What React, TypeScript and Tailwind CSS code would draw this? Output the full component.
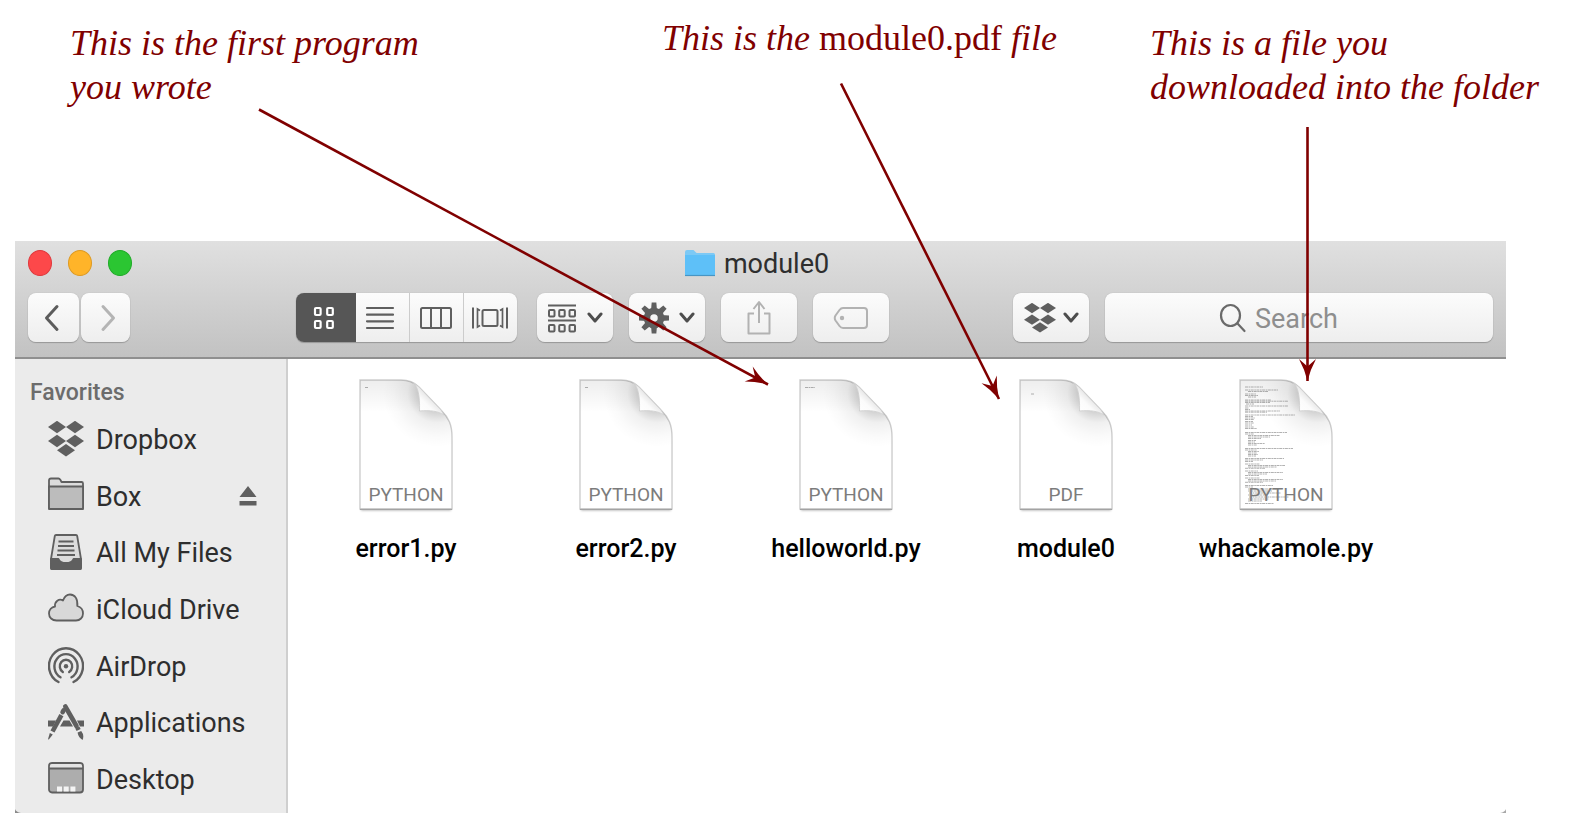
import type { ReactNode } from 'react';

const INK = '#5f5f5f';

function DropboxMark({ className }: { className: string }) {
  const centres = [[9, 6], [27, 6], [9, 20], [27, 20], [18, 29.3]];
  return (
    <svg viewBox="0 0 36 36" preserveAspectRatio="none" className={className} fill={INK} aria-hidden="true">
      {centres.map(([x, y]) => (
        <path key={`${x}-${y}`} d={`M${x - 9} ${y}L${x} ${y - 6.2}L${x + 9} ${y}L${x} ${y + 6.2}Z`} />
      ))}
    </svg>
  );
}

function SideIcon({ children }: { children: ReactNode }) {
  return (
    <svg viewBox="0 0 36 38" className="h-[38px] w-9 shrink-0" fill="none" stroke={INK} strokeWidth="1.8" strokeLinejoin="round" aria-hidden="true">
      {children}
    </svg>
  );
}

const boxIcon = (
  <SideIcon>
    <path d="M1 32V3.500Q1 1.500 3 1.500H10.500Q11.500 1.500 12.300 2.700L13.500 5H33.500Q35 5 35 6.500V32Z" fill="#dcdcdc" />
    <path d="M1 9.500H35V30.500Q35 32 33.500 32H2.500Q1 32 1 30.500Z" fill="#bcbcbc" />
  </SideIcon>
);

const filesIcon = (
  <SideIcon>
    <path d="M8 2H28Q29 2 29.200 3L33 26V35Q33 36 32 36H4Q3 36 3 35V26L6.800 3Q7 2 8 2Z" fill="#dcdcdc" />
    <path d="M3 26H10.500Q12 30 18 30Q24 30 25.500 26H33V35Q33 36 32 36H4Q3 36 3 35Z" fill={INK} />
    <path d="M10.500 8.500H25.500M10 13H26M9.500 17.500H26.500M9 22H27" />
  </SideIcon>
);

const cloudIcon = (
  <SideIcon>
    <path d="M8.500 30.500C4 30.500 1 27.500 1 23.500C1 20 3.500 17 7 16.500C6.500 11.500 11 8 15 10.500C16.500 6.500 19 4.500 22 4.500C27 4.500 30 9 29.300 16C33 17 35 20 35 23.500C35 27.500 32 30.500 28 30.500Z" fill="#d8d8d8" />
  </SideIcon>
);

const airdropIcon = (
  <SideIcon>
    <g strokeWidth="2.400" strokeLinecap="round">
      <path d="M10.500 35A17 17.800 0 1 1 25.500 35" />
      <path d="M12.500 30.300A11.600 12.300 0 1 1 23.500 30.300" />
      <path d="M14.800 25A6.200 6.600 0 1 1 21.200 25" />
    </g>
    <circle cx="18" cy="19.300" r="2.200" fill={INK} stroke="none" />
  </SideIcon>
);

const appsIcon = (
  <SideIcon>
    <g stroke="none" fill={INK}>
      <path d="M0 17.500H8L5 23.500H0ZM12 23.500L15.500 17.500H21.500L25 23.500ZM29 17.500H36V23.500H32Z" />
    </g>
    <g strokeWidth="4.600">
      <path d="M17.300 3.500L28.500 23" strokeLinecap="round" />
      <path d="M29.300 24.500L30.600 27" />
      <path d="M14.600 9.200L15.600 7.400" strokeLinecap="round" />
      <path d="M13.400 12.200L4.500 28.500" />
    </g>
    <path d="M1.800 30L4.800 31.500L0.800 36.500L0 36.200Z" fill={INK} stroke="none" />
    <path d="M29.600 29.500L33.200 28Q36.500 32 34.600 37Q30.300 34.500 29.600 29.500Z" fill={INK} stroke="none" />
  </SideIcon>
);

const desktopIcon = (
  <SideIcon>
    <rect x="1" y="3" width="34" height="29.500" rx="3" fill="#adadad" />
    <path d="M1.900 8V6Q1.900 3.900 4 3.900H32Q34.100 3.900 34.100 6V8Z" fill="#e4e4e4" stroke="none" />
    <path d="M1 8.500H35" />
    <path d="M9 26.500h5v5h-5zM15.700 26.500h5v5h-5zM22.400 26.500h5v5h-5z" fill="#f4f4f4" stroke="none" />
  </SideIcon>
);

const dropboxIcon = (
  <span className="flex h-[38px] w-9 shrink-0 items-center">
    <DropboxMark className="h-9 w-9" />
  </span>
);

const favorites = [
  { name: 'Dropbox', icon: dropboxIcon },
  { name: 'Box', icon: boxIcon, eject: true },
  { name: 'All My Files', icon: filesIcon },
  { name: 'iCloud Drive', icon: cloudIcon },
  { name: 'AirDrop', icon: airdropIcon },
  { name: 'Applications', icon: appsIcon },
  { name: 'Desktop', icon: desktopIcon },
];

/* Preview lines: y, indent, length */
const codeLines = [
  [7, 0, 18], [10, 0, 33], [11.5, 3, 20], [14, 0, 11], [15.5, 0, 13], [17, 3, 8],
  [20, 0, 26], [21.2, 0, 43], [22.5, 0, 25], [24, 1, 8], [26, 0, 43], [28, 0, 4], [29.5, 0, 5],
  [31, 0, 35], [32.2, 0, 22], [35, 0, 50], [36.5, 0, 8], [38, 0, 10], [39.5, 0, 9], [41.5, 0, 8], [43, 0, 9],
  [45, 0, 7], [47, 0, 9], [48.5, 0, 12], [52.5, 0, 42], [54, 0, 9], [55.5, 3, 32], [57, 3, 22], [58.5, 3, 13],
  [60.5, 3, 8], [62, 3, 7], [63.5, 3, 17], [65, 3, 9], [68.5, 0, 48], [70, 0, 12], [71.5, 3, 11], [73, 3, 9],
  [74.5, 3, 10], [76, 3, 8], [78.5, 0, 39], [80, 0, 18], [81.5, 0, 8], [84, 0, 15], [85.5, 3, 37], [87, 3, 29],
  [88.3, 0, 20], [91, 0, 13], [92.5, 3, 35], [94, 3, 19], [95.5, 0, 14], [98, 0, 15], [99.5, 3, 35], [101, 3, 28],
  [102.3, 0, 18], [105.5, 0, 28], [107, 0, 8], [109, 3, 30], [111, 3, 24], [113, 4, 32], [115, 3, 18], [117, 4, 40],
  [119, 3, 21], [121, 3, 14], [123.5, 0, 29],
];

type Doc = { name: string; kind: string; marks: number[][] };

const docs: Doc[] = [
  { name: 'error1.py', kind: 'PYTHON', marks: [[7.5, 0, 3]] },
  { name: 'error2.py', kind: 'PYTHON', marks: [[7.5, 0, 3]] },
  { name: 'helloworld.py', kind: 'PYTHON', marks: [[7.5, 0, 10]] },
  { name: 'module0', kind: 'PDF', marks: [[14, 6, 3]] },
  { name: 'whackamole.py', kind: 'PYTHON', marks: codeLines },
];

function DocIcon({ marks }: { marks: number[][] }) {
  const page = 'M1 1H42C51 1 56 4 60 8L82 31C90 39 93 46 93 58V130H1Z';
  return (
    <svg viewBox="0 0 94 134" className="col-start-1 row-start-1 h-[134px] w-[94px]" aria-hidden="true">
      <path d="M2 60H92V131.500H2Z" fill="#000" opacity="0.3" filter="url(#soft)" />
      <path d={page} fill="#fff" stroke="#cfcfcf" strokeWidth="1.4" />
      <path d={page} fill="url(#topShade)" />
      <path d={page} fill="url(#foldShade)" />
      <path d="M1 130.300H93" stroke="#a3a3a3" strokeWidth="1.200" />
      {marks.map(([y, x, w]) => (
        <path key={y} d={`M${6 + x} ${y + 1}h${w}`} stroke="#555" strokeWidth="0.9" strokeDasharray="3 0.6 1.6 0.5" opacity="0.5" />
      ))}
      <path d="M54 3.500C59 8 61 16 60.500 32C71 31 79 32 85 36L82 31L60 8Z" fill="url(#flap)" stroke="#d0d0d0" strokeWidth="0.9" />
    </svg>
  );
}

function Chevron() {
  return (
    <svg viewBox="0 0 16 12" className="h-3 w-4" fill="none" stroke="#4d4d4d" strokeWidth="3" strokeLinecap="round" strokeLinejoin="round" aria-hidden="true">
      <path d="M2 2L8 9L14 2" />
    </svg>
  );
}

const face = 'flex h-[49px] items-center justify-center bg-linear-to-b from-[#fcfcfc] to-[#eeeeee]';
const tile = `${face} rounded-lg shadow-[0_1px_1px_#979797,0_0_1px_#a0a0a0]`;

function Note({ className, children }: { className: string; children: ReactNode }) {
  return <p className={`whitespace-nowrap text-[36px] leading-[44px] italic text-[#800000] ${className}`}>{children}</p>;
}

export default function App() {
  return (
    <main className="relative min-h-[829px] bg-white font-[Roboto,sans-serif]">
      <header className="grid h-[241px] grid-cols-[592fr_488fr_430fr] items-start pl-[70px] font-['Palatino_Linotype','Liberation_Serif',serif]">
        <Note className="pt-[21px]">This is the first program<br />you wrote</Note>
        <Note className="pt-4">This is the <span className="not-italic">module0.pdf</span> file</Note>
        <Note className="pt-[21px]">This is a file you<br />downloaded into the folder</Note>
      </header>

      <section className="relative mr-[74px] ml-[15px] flex min-h-[572px] flex-col" aria-label="module0">
        <div className="border-b-2 border-[#8f8f8f] bg-linear-to-b from-[#e0e0e0] to-[#c2c2c2] px-3 pb-[15px]">
          <div className="grid h-11 grid-cols-[1fr_auto_1fr] items-center">
            <div className="flex gap-4 pl-px">
              <button aria-label="Close" className="h-[26px] w-6 rounded-[50%] border border-[#e0383c] bg-[#fd484a]" />
              <button aria-label="Minimize" className="h-[26px] w-6 rounded-[50%] border border-[#de9a22] bg-[#ffb429]" />
              <button aria-label="Zoom" className="h-[26px] w-6 rounded-[50%] border border-[#1fab27] bg-[#2bc632]" />
            </div>
            <h1 className="flex items-center gap-2 pr-2 text-[27px] leading-8 text-[#2e2e2e]">
              <svg viewBox="0 0 32 28" className="h-7 w-8" aria-hidden="true">
                <path d="M1 26V3Q1 1 3 1H9.500L12.500 4H29.500Q31 4 31 5.500V26Z" fill="#7cc9f5" />
                <path d="M1 6H31V25Q31 26.500 29.500 26.500H2.500Q1 26.500 1 25Z" fill="#5ec0f8" />
                <path d="M1 26.500H31" stroke="#4795c4" strokeWidth="1.200" />
              </svg>
              <span className="pt-[2px]">module0</span>
            </h1>
          </div>
          <div className="mt-2 flex">
            <div className="flex gap-[2px] pl-px">
              <button aria-label="Back" className={`${tile} w-[51px]`}>
                <svg viewBox="0 0 16 28" className="mr-1 h-7 w-4" fill="none" stroke="#5c5c5c" strokeWidth="3" strokeLinecap="round" strokeLinejoin="round"><path d="M13 2.500L2.500 14L13 25.500" /></svg>
              </button>
              <button aria-label="Forward" className={`${tile} w-[49px]`}>
                <svg viewBox="0 0 16 28" className="ml-1 h-7 w-4" fill="none" stroke="#b4b4b4" strokeWidth="3" strokeLinecap="round" strokeLinejoin="round"><path d="M3 2.500L13.500 14L3 25.500" /></svg>
              </button>
            </div>
            <div className="grow-4" />
            <div className="flex overflow-hidden rounded-lg shadow-[0_1px_1px_#979797,0_0_1px_#a0a0a0]">
              <button aria-label="Icon view" aria-pressed="true" className="flex h-[49px] w-[60px] items-center justify-center bg-[#565656]">
                <svg viewBox="0 0 22 24" className="mr-1 h-6 w-[22px]" fill="none" stroke="#fff" strokeWidth="2.200"><rect x="2" y="2" width="5.600" height="7" rx="1" /><rect x="14.200" y="2" width="5.600" height="7" rx="1" /><rect x="2" y="15" width="5.600" height="7" rx="1" /><rect x="14.200" y="15" width="5.600" height="7" rx="1" /></svg>
              </button>
              <button aria-label="List view" className={`${face} w-[53px]`}>
                <svg viewBox="0 0 30 24" className="mr-1 h-6 w-[30px]" stroke={INK} strokeWidth="2.200" strokeLinecap="round"><path d="M2 2H28M2 8.700H28M2 15.300H28M2 22H28" /></svg>
              </button>
              <button aria-label="Column view" className={`${face} w-[54px] border-l border-[#cccccc]`}>
                <svg viewBox="0 0 34 24" className="h-6 w-[34px]" fill="none" stroke={INK} strokeWidth="2"><rect x="2" y="2" width="30" height="20" rx="1.500" /><path d="M12 2V22M22 2V22" /></svg>
              </button>
              <button aria-label="Cover Flow view" className={`${face} w-[54px] border-l border-[#cccccc]`}>
                <svg viewBox="0 0 38 24" className="h-6 w-[38px]" fill="none" stroke={INK} strokeWidth="2"><rect x="11.500" y="4" width="15" height="16" rx="1.500" /><path d="M2 1.500V22.500M36 1.500V22.500" /><path d="M9 4.500L6.500 3V21L9 19.500M29 4.500L31.500 3V21L29 19.500" strokeWidth="1.700" /></svg>
              </button>
            </div>
            <div className="ml-5 flex gap-4">
              <button aria-label="Arrange" className={`${tile} w-[76px] gap-[10px]`}>
                <svg viewBox="0 0 30 30" className="h-[30px] w-[30px]" fill="none" stroke={INK} strokeWidth="2"><path d="M1 2.500H29M1 17.500H29" strokeWidth="2.200" /><rect x="2" y="7" width="5.500" height="6.500" rx="1" /><rect x="12.200" y="7" width="5.500" height="6.500" rx="1" /><rect x="22.500" y="7" width="5.500" height="6.500" rx="1" /><rect x="2" y="22" width="5.500" height="6.500" rx="1" /><rect x="12.200" y="22" width="5.500" height="6.500" rx="1" /><rect x="22.500" y="22" width="5.500" height="6.500" rx="1" /></svg>
                <Chevron />
              </button>
              <button aria-label="Action" className={`${tile} w-[76px] gap-[10px]`}>
                <svg viewBox="-16 -17 32 34" className="h-[32px] w-[30px]" fill={INK}>
                  {[0, 45, 90, 135, 180, 225, 270, 315].map((a) => (
                    <path key={a} d="M-3.200 -8L-2.500 -16.500H2.500L3.200 -8Z" transform={`rotate(${a})`} />
                  ))}
                  <path fillRule="evenodd" d="M0 -11A11 11 0 1 1 0 11A11 11 0 1 1 0 -11ZM0 -4A4 4 0 1 0 0 4A4 4 0 1 0 0 -4Z" />
                </svg>
                <Chevron />
              </button>
              <button aria-label="Share" className={`${tile} w-[76px]`}>
                <svg viewBox="0 0 26 36" className="h-9 w-[26px]" fill="none" stroke="#b2b2b2" strokeWidth="2" strokeLinejoin="round"><path d="M8 13.500H2.500V33.500H23.500V13.500H18M13 23V3M7.500 9L13 2L18.500 9" /></svg>
              </button>
              <button aria-label="Edit tags" className={`${tile} w-[76px]`}>
                <svg viewBox="0 0 36 24" className="h-6 w-9" fill="none" stroke="#b2b2b2" strokeWidth="2" strokeLinejoin="round"><path d="M10 2H31Q34 2 34 5V19Q34 22 31 22H10Q8 22 6.500 20L2.500 14.500Q1 12 2.500 9.500L6.500 4Q8 2 10 2Z" /><circle cx="9" cy="12" r="2.200" fill="#b2b2b2" stroke="none" /></svg>
              </button>
            </div>
            <div className="grow-3" />
            <button aria-label="Dropbox" className={`${tile} w-[76px] gap-[7px]`}>
              <DropboxMark className="h-[30px] w-8" />
              <Chevron />
            </button>
            <label className={`${tile} mr-px ml-4 w-[388px] gap-2`}>
              <svg viewBox="0 0 28 30" className="h-[30px] w-7" fill="none" stroke="#6a6a6a" strokeWidth="2.200" strokeLinecap="round" aria-hidden="true"><ellipse cx="11.500" cy="12.500" rx="9.500" ry="10.500" /><path d="M18.500 20.500L25.500 28" /></svg>
              <input type="search" placeholder="Search" aria-label="Search" className="w-[124px] bg-transparent pt-[2px] text-[27px] leading-8 outline-none placeholder:text-[#8e8e8e]" />
            </label>
          </div>
        </div>

        <div className="flex flex-1">
          <nav className="flex w-[273px] shrink-0 flex-col border-r-2 border-[#cfcfcf] bg-[#ebebeb] pb-[6px]" aria-label="Favorites">
            <h2 className="h-[52px] pt-[18px] pl-[15px] text-[23px] leading-8 font-medium text-[#6c6c6c]">Favorites</h2>
            <ul className="grid flex-1 auto-rows-fr">
              {favorites.map((f) => (
                <li key={f.name} className="flex items-center pr-[29px] pl-[33px]">
                  <a href="#" className="flex flex-1 items-center gap-3 text-[27px] leading-8 text-[#2e2e2e]">
                    {f.icon}
                    <span className="pt-[2px]">{f.name}</span>
                  </a>
                  {f.eject && (
                    <button aria-label="Eject Box">
                      <svg viewBox="0 0 18 20" className="h-5 w-[18px]" fill={INK}><path d="M9 0L17.500 11H0.500ZM0.500 15H17.500V19.500H0.500Z" /></svg>
                    </button>
                  )}
                </li>
              ))}
            </ul>
          </nav>

          <ul className="flex flex-1 flex-wrap content-start pt-5 pl-2">
            {docs.map((d) => (
              <li key={d.name} className="flex w-[220px] flex-col items-center">
                <div className="grid justify-items-center">
                  <DocIcon marks={d.marks} />
                  <span className="col-start-1 row-start-1 mt-[104px] text-[19px] leading-6 text-[#7c7c7c]">{d.kind}</span>
                </div>
                <span className="mt-5 text-[25px] leading-8 font-medium text-black">{d.name}</span>
              </li>
            ))}
          </ul>
        </div>

        <svg viewBox="0 0 6 4" className="absolute bottom-0 left-0 h-1 w-[6px]" aria-hidden="true"><path d="M0 0Q1 3 6 4H0Z" fill="#8a8a8a" /></svg>
        <svg viewBox="0 0 6 4" className="absolute right-0 bottom-0 h-1 w-[6px]" aria-hidden="true"><path d="M6 0Q5 3 0 4H6Z" fill="#a8a8a8" /></svg>
      </section>

      <svg className="pointer-events-none absolute top-0 left-0 h-[829px] w-[1580px]" viewBox="0 0 1580 829" fill="none" aria-hidden="true">
        <defs>
          <marker id="head" markerUnits="userSpaceOnUse" markerWidth="26" markerHeight="20" refX="23" refY="10" orient="auto">
            <path d="M23 10Q11 7 1 1.500L8.500 10L1 18.500Q11 13 23 10Z" fill="#800000" />
          </marker>
          <filter id="soft" x="-10%" y="-10%" width="120%" height="120%"><feGaussianBlur stdDeviation="1.2" /></filter>
          <linearGradient id="topShade" x1="0" y1="0" x2="0" y2="1">
            <stop offset="0" stopColor="#000" stopOpacity="0.07" />
            <stop offset="0.25" stopColor="#000" stopOpacity="0" />
          </linearGradient>
          <radialGradient id="foldShade" gradientUnits="userSpaceOnUse" cx="78" cy="14" r="54">
            <stop offset="0.36" stopColor="#000" stopOpacity="0.17" />
            <stop offset="0.55" stopColor="#000" stopOpacity="0.06" />
            <stop offset="0.8" stopColor="#000" stopOpacity="0.02" />
            <stop offset="1" stopColor="#000" stopOpacity="0" />
          </radialGradient>
          <linearGradient id="flap" gradientUnits="userSpaceOnUse" x1="60" y1="32" x2="72" y2="20">
            <stop offset="0" stopColor="#fff" />
            <stop offset="0.6" stopColor="#fbfbfb" />
            <stop offset="1" stopColor="#e8e8e8" />
          </linearGradient>
        </defs>
        <g stroke="#800000" strokeWidth="2.6">
          <path d="M259 109.500L768 384.500" markerEnd="url(#head)" />
          <path d="M841 83.500L999 399" markerEnd="url(#head)" />
          <path d="M1307.500 127V381" markerEnd="url(#head)" />
        </g>
      </svg>
    </main>
  );
}
